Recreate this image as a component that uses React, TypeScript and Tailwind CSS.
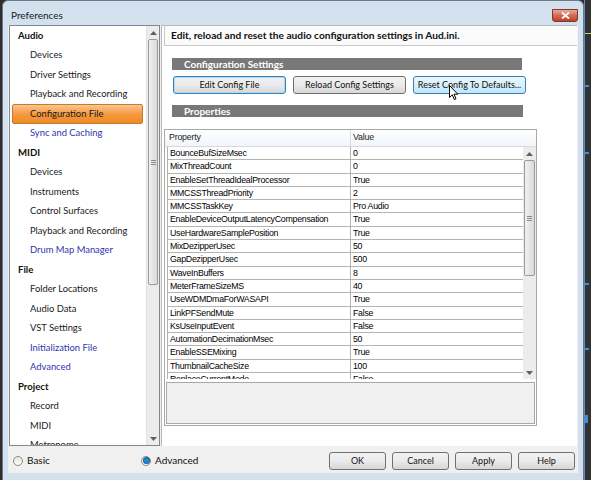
import type { ReactNode } from "react";

type NavItem = { label: string; selected?: boolean; link?: boolean };
type NavGroup = { title: string; items: NavItem[] };

const nav: NavGroup[] = [
  {
    title: "Audio",
    items: [
      { label: "Devices" },
      { label: "Driver Settings" },
      { label: "Playback and Recording" },
      { label: "Configuration File", selected: true },
      { label: "Sync and Caching", link: true },
    ],
  },
  {
    title: "MIDI",
    items: [
      { label: "Devices" },
      { label: "Instruments" },
      { label: "Control Surfaces" },
      { label: "Playback and Recording" },
      { label: "Drum Map Manager", link: true },
    ],
  },
  {
    title: "File",
    items: [
      { label: "Folder Locations" },
      { label: "Audio Data" },
      { label: "VST Settings" },
      { label: "Initialization File", link: true },
      { label: "Advanced", link: true },
    ],
  },
  {
    title: "Project",
    items: [{ label: "Record" }, { label: "MIDI" }, { label: "Metronome" }],
  },
];

const rows: [string, string][] = [
  ["BounceBufSizeMsec", "0"],
  ["MixThreadCount", "0"],
  ["EnableSetThreadIdealProcessor", "True"],
  ["MMCSSThreadPriority", "2"],
  ["MMCSSTaskKey", "Pro Audio"],
  ["EnableDeviceOutputLatencyCompensation", "True"],
  ["UseHardwareSamplePosition", "True"],
  ["MixDezipperUsec", "50"],
  ["GapDezipperUsec", "500"],
  ["WaveInBuffers", "8"],
  ["MeterFrameSizeMS", "40"],
  ["UseWDMDmaForWASAPI", "True"],
  ["LinkPFSendMute", "False"],
  ["KsUseInputEvent", "False"],
  ["AutomationDecimationMsec", "50"],
  ["EnableSSEMixing", "True"],
  ["ThumbnailCacheSize", "100"],
  ["ReplaceCurrentMode", "False"],
];

function WinButton({
  children,
  width,
  state,
}: {
  children: ReactNode;
  width: string;
  state?: "focus" | "hover";
}) {
  const look =
    state === "hover"
      ? "border-[#3c7fb1] bg-gradient-to-b from-[#eaf6fd] via-[#d9f0fc] to-[#bee6fd]"
      : state === "focus"
        ? "border-[#3c7fb1] bg-gradient-to-b from-[#f2f2f2] via-[#ebebeb] to-[#d6d6d6] shadow-[inset_0_0_0_1px_#a6dcf7]"
        : "border-[#707070] bg-gradient-to-b from-[#f2f2f2] via-[#ebebeb] to-[#d6d6d6]";
  return (
    <div
      className={`flex h-[18px] ${width} shrink-0 items-center justify-center rounded-[3px] border text-[9px] text-[#111] ${look}`}
    >
      {children}
    </div>
  );
}

function ScrollArrow({ up }: { up?: boolean }) {
  return (
    <div className="flex h-[13px] items-center justify-center">
      <svg width="7" height="4" viewBox="0 0 7 4">
        <path d={up ? "M0 4 L3.5 0 L7 4 Z" : "M0 0 L3.5 4 L7 0 Z"} fill="#606060" />
      </svg>
    </div>
  );
}

function Thumb({ height }: { height: string }) {
  return (
    <div
      className={`mx-[1px] flex ${height} items-center justify-center rounded-[2px] border border-[#9a9a9a] bg-gradient-to-r from-[#f1f1f1] to-[#dadada]`}
    >
      <div className="flex w-[5px] flex-col gap-[1px]">
        <div className="h-px bg-[#8a8a8a]" />
        <div className="h-px bg-[#8a8a8a]" />
        <div className="h-px bg-[#8a8a8a]" />
      </div>
    </div>
  );
}

function Radio({ checked, label }: { checked?: boolean; label: string }) {
  return (
    <div className="flex items-center gap-[4px]">
      <div className="flex h-[10px] w-[10px] items-center justify-center rounded-full border border-[#8a8a8a] bg-gradient-to-b from-[#e6e6e6] to-[#fbfbfb]">
        {checked && <div className="h-[5px] w-[5px] rounded-full bg-[#1f8bd1] shadow-[0_0_0_1px_#145f96]" />}
      </div>
      <span className="text-[10px] text-[#111]">{label}</span>
    </div>
  );
}

export default function App() {
  return (
    <div
      className="relative flex h-[480px] w-[591px] overflow-hidden bg-[#2e2e2e]"
      style={{ fontFamily: "Lato, 'Liberation Sans', sans-serif" }}
    >
      {/* window */}
      <div className="ml-[2px] flex h-[481px] w-[582px] shrink-0 flex-col rounded-t-[6px] border border-[#6a7a8c] bg-[#d3e0ee] px-[5px] pb-[7px]">
        <div className="flex h-[24px] shrink-0 items-start justify-between">
          <span className="mt-[7px] pl-[3px] text-[10px] text-[#1a1a1a]">Preferences</span>
          <div className="mt-[8px] flex h-[13px] w-[26px] items-center justify-center rounded-b-[3px] border border-[#7a3a2e] bg-gradient-to-b from-[#e9a99b] via-[#d46a55] to-[#c23e26]">
            <svg width="9" height="7" viewBox="0 0 9 7">
              <path d="M1 0.5 L8 6.5 M8 0.5 L1 6.5" stroke="#fff" strokeWidth="1.8" />
            </svg>
          </div>
        </div>

        {/* client */}
        <div className="flex h-[448px] shrink-0 flex-col bg-[#f0f0f0]">
          <div className="flex h-[421px] shrink-0">
            {/* sidebar */}
            <div className="ml-[1px] flex w-[151px] shrink-0 border border-[#828790] bg-white">
              <div className="flex-1 overflow-hidden">
                {nav.map((g) => (
                  <div key={g.title}>
                    <div className="flex h-[19.5px] items-center pl-[8px] text-[9.6px] font-bold text-[#111]">
                      {g.title}
                    </div>
                    {g.items.map((it) =>
                      it.selected ? (
                        <div
                          key={it.label}
                          className="ml-[2px] flex h-[19.5px] w-[131px] items-center rounded-[2px] border border-[#c67a2c] bg-gradient-to-b from-[#fcc48c] via-[#f49a3f] to-[#ef8a22] pl-[17px] text-[9.4px] text-[#1a1a1a]"
                        >
                          {it.label}
                        </div>
                      ) : (
                        <div
                          key={it.label}
                          className={`flex h-[19.5px] items-center pl-[20px] text-[9.4px] ${it.link ? "text-[#3333b0]" : "text-[#1a1a1a]"}`}
                        >
                          {it.label}
                        </div>
                      ),
                    )}
                  </div>
                ))}
              </div>
              <div className="flex w-[13px] shrink-0 flex-col border-l border-[#e2e2e2] bg-[#ececec]">
                <ScrollArrow up />
                <Thumb height="h-[246px]" />
                <div className="flex-1" />
                <ScrollArrow />
              </div>
            </div>

            {/* right pane */}
            <div className="ml-[1px] mr-[1px] flex flex-1 flex-col border-l border-t border-[#b8b8b8] bg-white">
              <div className="ml-[2px] flex h-[20px] shrink-0 items-center border-b border-l border-[#c8c8c8] bg-[#fbfbfb] pl-[6px] text-[10.2px] font-bold text-[#111]">
                Edit, reload and reset the audio configuration settings in Aud.ini.
              </div>

              <div className="ml-[10px] mt-[12px] flex h-[12px] w-[350px] items-center bg-[#787878] pl-[12px] text-[10px] font-bold text-white">
                Configuration Settings
              </div>
              <div className="ml-[11px] mt-[6px] flex gap-[7px]">
                <WinButton width="w-[113px]" state="focus">Edit Config File</WinButton>
                <WinButton width="w-[113px]">Reload Config Settings</WinButton>
                <WinButton width="w-[113px]" state="hover">Reset Config To Defaults...</WinButton>
              </div>
              <div className="ml-[10px] mt-[11px] flex h-[12px] w-[351px] items-center bg-[#787878] pl-[12px] text-[10px] font-bold text-white">
                Properties
              </div>

              {/* property grid */}
              <div
                className="ml-[2px] mt-[12px] flex h-[297px] w-[373px] flex-col border border-[#a8a8a8] bg-white"
                style={{ fontFamily: "'Liberation Sans', Arial, sans-serif" }}
              >
                <div className="flex h-[17px] shrink-0 border-b border-[#d5dbe3] bg-gradient-to-b from-white to-[#f1f5fa] text-[8.8px] tracking-[-0.2px] text-[#222]">
                  <div className="flex w-[186px] items-center border-r border-[#d5dbe3] pl-[4px]">Property</div>
                  <div className="flex items-center pl-[2px]">Value</div>
                </div>
                <div className="flex h-[232px] shrink-0">
                  <div className="ml-[2px] flex-1 overflow-hidden border-l border-[#b0b0b0]">
                    {rows.map(([k, v]) => (
                      <div
                        key={k}
                        className="flex h-[13.3px] border-b border-[#b4b4b4] text-[8.8px] leading-[12px] tracking-[-0.27px] text-black"
                      >
                        <div className="w-[183px] shrink-0 border-r border-[#b4b4b4] pl-[2px]">{k}</div>
                        <div className="pl-[2px]">{v}</div>
                      </div>
                    ))}
                  </div>
                  <div className="flex w-[13px] shrink-0 flex-col bg-[#ececec]">
                    <ScrollArrow up />
                    <Thumb height="h-[116px]" />
                    <div className="flex-1" />
                    <ScrollArrow />
                  </div>
                </div>
                <div className="mx-[1px] mt-[3px] h-[42px] border border-[#a8a8a8] bg-[#f0f0f0]" />
              </div>
            </div>
          </div>

          {/* bottom bar */}
          <div className="flex flex-1 items-center pt-[2px]">
            <div className="ml-[5px] w-[128px]">
              <Radio label="Basic" />
            </div>
            <Radio checked label="Advanced" />
            <div className="ml-auto mr-[3px] flex gap-[6px]">
              <WinButton width="w-[57px]">OK</WinButton>
              <WinButton width="w-[57px]">Cancel</WinButton>
              <WinButton width="w-[57px]">Apply</WinButton>
              <WinButton width="w-[57px]">Help</WinButton>
            </div>
          </div>
        </div>
      </div>

      {/* background app strip */}
      <div className="relative flex-1 border-l border-[#5b8fc9] bg-[#323232]">
        <div className="absolute left-0 top-[33px] h-[1px] w-full bg-[#d8c45a]" />
        <div className="absolute left-0 top-[85px] h-[2px] w-[4px] bg-[#4a8ad0]" />
        <div className="absolute left-0 top-[152px] h-[2px] w-[4px] bg-[#4a8ad0]" />
        <div className="absolute left-0 top-[283px] h-[2px] w-[4px] bg-[#4a8ad0]" />
        <div className="absolute left-0 top-[348px] h-[2px] w-[4px] bg-[#4a8ad0]" />
        <div className="absolute left-0 top-[415px] h-[8px] w-[3px] bg-[#4a8ad0]" />
      </div>

      {/* mouse cursor */}
      <svg className="absolute left-[449px] top-[85px]" width="10" height="16" viewBox="0 0 10 16">
        <path d="M0.5 0.5 L0.5 12.5 L3.3 9.8 L5.3 14.5 L7 13.8 L5 9.2 L8.8 9.2 Z" fill="#fff" stroke="#000" strokeWidth="1" />
      </svg>
    </div>
  );
}
